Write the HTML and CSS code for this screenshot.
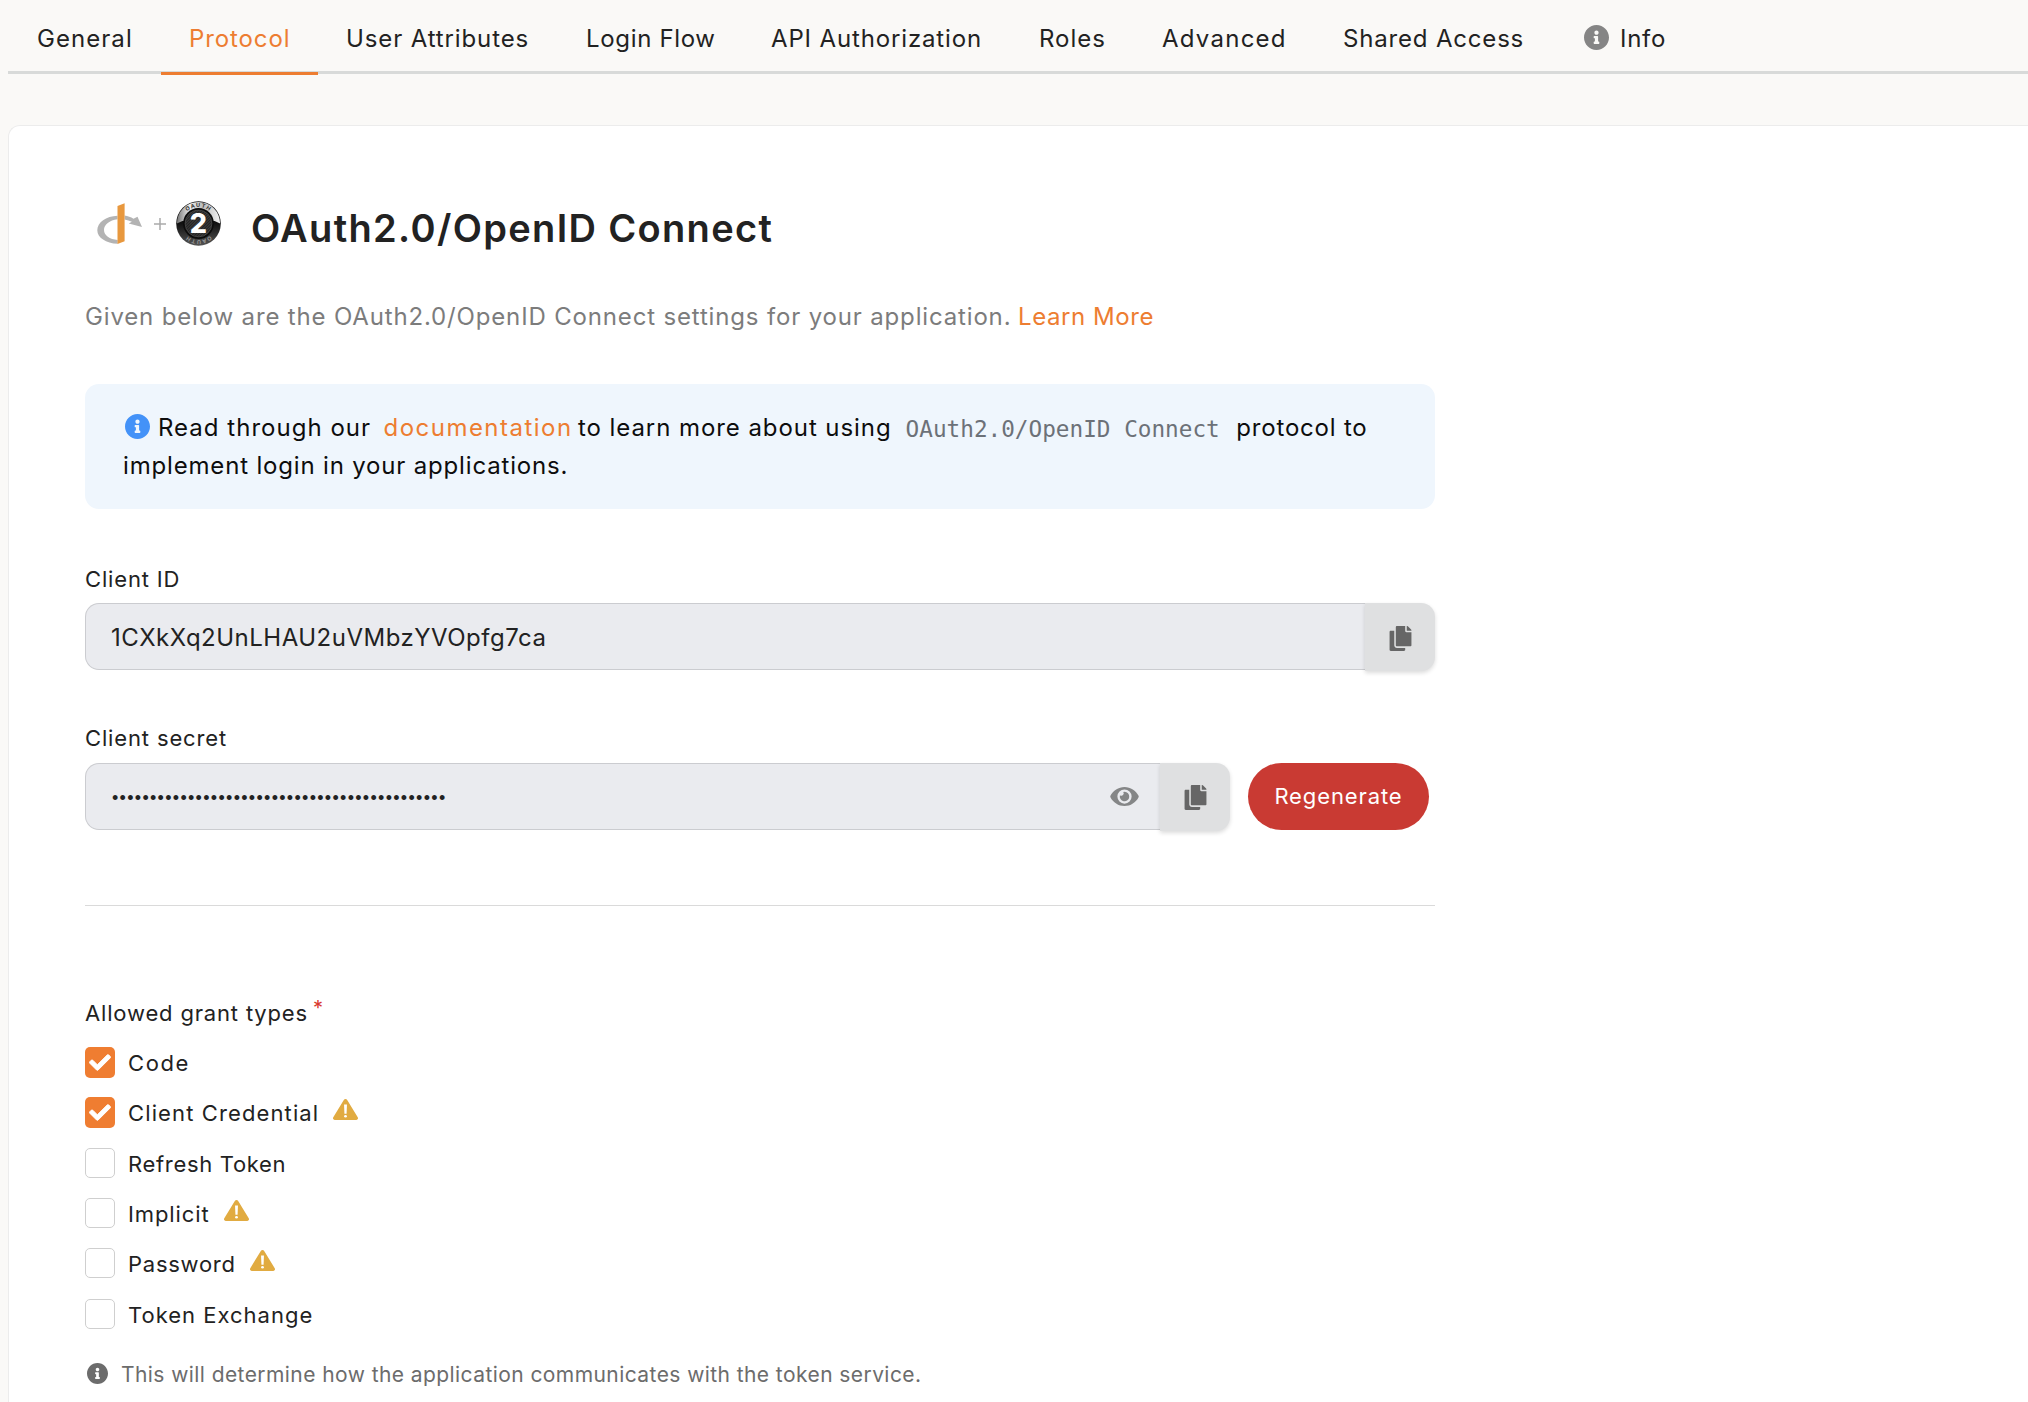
FILE: index.html
```
<!DOCTYPE html>
<html lang="en">
<head>
<meta charset="utf-8">
<title>OAuth2.0/OpenID Connect</title>
<link rel="stylesheet" href="styles.css">
</head>
<body>
<svg class="sprite" aria-hidden="true">
  <symbol id="info" viewBox="8 8 496 496"><path d="M256 8C119.043 8 8 119.083 8 256c0 136.997 111.043 248 248 248s248-111.003 248-248C504 119.083 392.957 8 256 8zm0 110c23.196 0 42 18.804 42 42s-18.804 42-42 42-42-18.804-42-42 18.804-42 42-42zm56 254c0 6.627-5.373 12-12 12h-88c-6.627 0-12-5.373-12-12v-24c0-6.627 5.373-12 12-12h12v-64h-12c-6.627 0-12-5.373-12-12v-24c0-6.627 5.373-12 12-12h64c6.627 0 12 5.373 12 12v100h12c6.627 0 12 5.373 12 12v24z"/></symbol>
  <symbol id="copy" viewBox="0 0 448 512"><path d="M320 448v40c0 13.255-10.745 24-24 24H24c-13.255 0-24-10.745-24-24V120c0-13.255 10.745-24 24-24h72v296c0 30.879 25.121 56 56 56h168zm0-344V0H152c-13.255 0-24 10.745-24 24v368c0 13.255 10.745 24 24 24h272c13.255 0 24-10.745 24-24V128H344c-13.2 0-24-10.8-24-24zm120.971-31.029L375.029 7.029A24 24 0 0 0 358.059 0H352v96h96v-6.059a24 24 0 0 0-7.029-16.97z"/></symbol>
  <symbol id="eye" viewBox="0 64 576 384"><path d="M572.52 241.4C518.29 135.59 410.93 64 288 64S57.68 135.64 3.48 241.41a32.35 32.35 0 0 0 0 29.19C57.71 376.41 165.07 448 288 448s230.32-71.64 284.52-177.41a32.35 32.35 0 0 0 0-29.19zM288 400a144 144 0 1 1 144-144 143.93 143.93 0 0 1-144 144zm0-240a95.31 95.31 0 0 0-25.31 3.79 47.85 47.85 0 0 1-66.9 66.9A95.78 95.78 0 1 0 288 160z"/></symbol>
  <symbol id="check" viewBox="-12 52 536 408"><path stroke="currentColor" stroke-width="24" stroke-linejoin="round" d="M173.898 439.404l-166.4-166.4c-9.997-9.997-9.997-26.206 0-36.204l36.203-36.204c9.997-9.998 26.207-9.998 36.204 0L192 312.69 432.095 72.596c9.997-9.997 26.207-9.997 36.204 0l36.203 36.204c9.997 9.997 9.997 26.206 0 36.204l-294.4 294.401c-9.998 9.997-26.207 9.997-36.204-.001z"/></symbol>
  <symbol id="warn" viewBox="0 32 512 448" preserveAspectRatio="none"><path d="M256 32c14.2 0 27.3 7.5 34.5 19.8l216 368c7.3 12.4 7.3 27.7.2 40.1S486.3 480 472 480H40c-14.3 0-27.6-7.7-34.7-20.1s-7-27.8.2-40.1l216-368C228.7 39.5 241.8 32 256 32z"/><path fill="#fff" d="M226 150h60l-8 198h-44z"/><circle fill="#fff" cx="256" cy="400" r="29"/></symbol>
</svg>

<nav class="tabs">
  <a class="tab t-general"><span class="s1">General</span></a>
  <a class="tab t-protocol active"><span class="s2">Protocol</span></a>
  <a class="tab t-attr"><span class="s3">User Attributes</span></a>
  <a class="tab t-login"><span class="s4">Login Flow</span></a>
  <a class="tab t-api"><span class="s5">API Authorization</span></a>
  <a class="tab t-roles"><span class="s6">Roles</span></a>
  <a class="tab t-adv"><span class="s7">Advanced</span></a>
  <a class="tab t-shared"><span class="s8">Shared Access</span></a>
  <a class="tab t-info"><svg><use href="#info"/></svg><span class="s9">Info</span></a>
</nav>

<main class="card">
  <header class="head">
    <svg class="openid" viewBox="0 0 46 42">
      <path fill="#b3b3b3" d="M20.5 12.7C9 13.2.3 19.3.3 27.2c0 7.4 8.6 13 20.4 13.6V37C12.600 36.300 7 32.400 7 27c0-5.400 5.600-9.700 13.500-10.700zM27.600 12.400c3.300.5 6.200 1.500 8.900 3.300l4-1.900L45 24l-13.300-3.600 3.200-1.600c-2.200-1.200-4.600-2-7.300-2.400z"/>
      <path fill="#e8983e" d="M20.500 3L27.600.2v38L20.500 41z"/>
    </svg>
    <svg class="plus" viewBox="0 0 12 12"><path d="M6 0v12M0 6h12"/></svg>
    <svg class="oauth" viewBox="0 0 45 45">
      <defs>
        <linearGradient id="rim" x1="0" y1="0" x2="1" y2="0"><stop offset="0" stop-color="#777"/><stop offset=".3" stop-color="#eee"/><stop offset=".6" stop-color="#bbb"/><stop offset="1" stop-color="#f2f2f2"/></linearGradient>
        <linearGradient id="base" x1="0" y1="0" x2="0" y2="1"><stop offset=".5" stop-color="#111"/><stop offset="1" stop-color="#555"/></linearGradient>
        <pattern id="mesh" width="2" height="2" patternUnits="userSpaceOnUse" patternTransform="rotate(45)"><rect width="2" height="2" fill="#222"/><rect width="1" height="2" fill="#3c3c3c"/></pattern>
        <path id="arcTop" d="M6 22.500a16.500 16.500 0 0 1 33 0"/>
        <path id="arcBottom" d="M39 22.500a16.500 16.500 0 0 1-33 0"/>
      </defs>
      <circle cx="22.500" cy="22.500" r="22.300" fill="url(#base)"/>
      <path fill="url(#rim)" d="M.9 22.500a21.600 21.600 0 0 1 43.200 0l-5.500-2.500H6.400z"/>
      <circle cx="22.500" cy="22.500" r="15.400" fill="#0c0c0c"/>
      <circle cx="22.500" cy="22.500" r="13.400" fill="url(#mesh)" stroke="#555" stroke-width=".6"/>
      <text class="rim-text"><textPath href="#arcTop" startOffset="50%" text-anchor="middle">OAUTH</textPath></text>
      <text class="rim-text dim"><textPath href="#arcBottom" startOffset="50%" text-anchor="middle">OAUTH</textPath></text>
      <text class="two" x="22.300" y="32" text-anchor="middle">2</text>
    </svg>
    <h1>OAuth2.0/OpenID Connect</h1>
  </header>

  <p class="sub"><span class="sub-text">Given below are the OAuth2.0/OpenID Connect settings for your application.</span><a class="learn">Learn More</a></p>

  <section class="alert">
    <p class="line"><svg><use href="#info"/></svg><span class="a1">Read through our</span><a class="a2">documentation</a><span class="a3">to learn more about using</span><code>OAuth2.0/OpenID Connect</code><span class="a4">protocol to</span></p>
    <p class="line"><span class="a5">implement login in your applications.</span></p>
  </section>

  <label class="label client-id">Client ID</label>
  <div class="field id-field">
    <div class="input"><span class="id-value">1CXkXq2UnLHAU2uVMbzYVOpfg7ca</span></div>
    <button class="copy"><svg><use href="#copy"/></svg></button>
  </div>

  <label class="label client-secret">Client secret</label>
  <div class="field secret-field">
    <div class="input"><span class="dots">••••••••••••••••••••••••••••••••••••••••••••</span><svg class="eye"><use href="#eye"/></svg></div>
    <button class="copy"><svg><use href="#copy"/></svg></button>
    <button class="regen">Regenerate</button>
  </div>

  <hr>

  <div class="label grants">Allowed grant types<sup>*</sup></div>
  <ul class="options">
    <li><span class="box on"><svg><use href="#check"/></svg></span><span class="g1">Code</span></li>
    <li><span class="box on"><svg><use href="#check"/></svg></span><span class="g2">Client Credential</span><svg class="warn"><use href="#warn"/></svg></li>
    <li><span class="box"></span><span class="g3">Refresh Token</span></li>
    <li><span class="box"></span><span class="g4">Implicit</span><svg class="warn"><use href="#warn"/></svg></li>
    <li><span class="box"></span><span class="g5">Password</span><svg class="warn"><use href="#warn"/></svg></li>
    <li><span class="box"></span><span class="g6">Token Exchange</span></li>
  </ul>
  <p class="note"><svg><use href="#info"/></svg><span>This will determine how the application communicates with the token service.</span></p>
</main>
</body>
</html>
```
FILE: styles.css
```
* { box-sizing: border-box; }
html, body { height: 100%; }
body {
  margin: 0;
  padding-left: 8px;
  overflow: hidden;
  background: #faf9f7;
  color: #222;
  font-family: Inter, "Liberation Sans", sans-serif;
  font-size: 24px;
  font-weight: 400;
}
p, h1, ul { margin: 0; padding: 0; }
svg { display: block; flex: none; fill: currentColor; }
button { border: 0; padding: 0; font: inherit; }
span, a, code { white-space: nowrap; }
.sprite { position: absolute; width: 0; height: 0; }

/* Tabs */
.tabs { display: flex; height: 74px; border-bottom: 3px solid #d8dad9; }
.tab {
  display: flex;
  flex: none;
  height: 75px;
  padding: 24px 0 0 28px;
  line-height: 30px;
  border-bottom: 3px solid transparent;
}
.tab.active { color: #ed7d31; border-color: #ed7d31; }
.t-general { width: 153px; padding-left: 29px; }
.t-protocol { width: 157px; }
.t-attr { width: 240px; }
.t-login { width: 185px; }
.t-api { width: 268px; }
.t-roles { width: 123px; }
.t-adv { width: 181px; }
.t-shared { width: 238px; }
.t-info { padding-left: 31px; }
.t-info svg { width: 25px; height: 25px; margin: 1px 11px 0 0; color: #858585; }
.s1 { letter-spacing: 1.05px; }
.s2 { letter-spacing: .9px; }
.s3 { letter-spacing: .88px; }
.s4 { letter-spacing: .66px; }
.s5 { letter-spacing: .858px; }
.s6 { letter-spacing: 1px; }
.s7 { letter-spacing: 1.25px; }
.s8 { letter-spacing: .82px; }
.s9 { letter-spacing: .7px; }

/* Card */
.card {
  display: flex;
  flex-direction: column;
  height: 1290px;
  margin-top: 51px;
  padding: 75px 0 0 76px;
  background: #fff;
  border: solid #ececec;
  border-width: 1px 0 0 1px;
  border-radius: 12px 0 0 0;
}
.head { display: flex; height: 45px; padding-left: 12px; }
.openid { width: 46px; height: 42px; margin-top: 2px; }
.plus { width: 12px; height: 12px; margin: 17px 10px 0 11px; stroke: #aaa; stroke-width: 1.5; }
.oauth { width: 45px; height: 45px; margin-right: 30px; }
.rim-text { font-size: 5.500px; font-weight: 700; letter-spacing: 1px; fill: #333; }
.rim-text.dim { fill: #999; }
.two { font-size: 27px; font-weight: 800; fill: #fff; }
h1 { margin-top: 4px; font-size: 38px; line-height: 46px; font-weight: 600; letter-spacing: 1.341px; white-space: nowrap; }
.sub { display: flex; margin-top: 56px; line-height: 30px; color: #7c7c7c; }
.sub-text { width: 933px; letter-spacing: .84px; }
.learn { letter-spacing: .576px; color: #ed7d31; }

.alert {
  width: 1350px;
  height: 125px;
  margin-top: 52px;
  padding: 25px 38px 24px;
  border-radius: 14px;
  background: #eff6fd;
  color: #0d0d0d;
  line-height: 38px;
}
.line { display: flex; height: 38px; }
.line svg { width: 25px; height: 25px; margin: 5px 10px 0 2px; color: #4392f8; }
.a1 { letter-spacing: 1.017px; margin-left: -2px; }
.a2 { letter-spacing: 1.485px; margin-left: 12.400px; color: #ed7d31; }
.a3 { letter-spacing: .933px; margin-left: 5.300px; }
.a4 { letter-spacing: .799px; margin-left: 16.600px; }
.a5 { letter-spacing: .827px; }
code { margin: 1px 0 0 14px; font-family: "DejaVu Sans Mono", monospace; font-size: 22.700px; color: #6c7178; }

/* Fields */
.label { font-size: 22px; line-height: 28px; }
.client-id { margin-top: 56px; letter-spacing: .832px; }
.client-secret { margin-top: 54px; letter-spacing: .86px; }
.field { display: flex; height: 67px; }
.id-field { margin-top: 10px; width: 1350px; }
.secret-field { margin-top: 11px; }
.input {
  display: flex;
  flex: 1;
  align-items: center;
  justify-content: space-between;
  padding: 0 21px 0 25px;
  background: #eaebef;
  border: 1px solid #cbccd0;
  border-right: 0;
  border-radius: 14px 0 0 14px;
}
.secret-field .input { flex: none; width: 1075px; }
.id-value { padding-top: 2px; font-size: 24px; letter-spacing: .497px; }
.dots { padding: 3px 0 0 1px; font-family: "Liberation Sans", sans-serif; font-size: 18px; letter-spacing: 1.300px; }
.eye { width: 29px; height: 19px; color: #858687; }
.copy {
  display: flex;
  align-items: center;
  justify-content: center;
  width: 70px;
  height: 68px;
  border-radius: 0 14px 14px 0;
  background: #dfe0e1;
  color: #666;
  box-shadow: 0 2px 4px rgba(0, 0, 0, .14);
}
.copy svg { width: 23px; height: 25px; margin-top: 2px; }
.secret-field .copy svg { margin: 0; }
.regen {
  width: 181px;
  margin-left: 18px;
  padding-bottom: 1px;
  border-radius: 34px;
  background: #c93a33;
  color: #fff;
  font-size: 22px;
  letter-spacing: .897px;
}
hr { width: 1350px; height: 1px; margin: 75px 0 0; border: 0; background: #dadada; }

/* Grant types */
.grants { display: flex; margin-top: 93px; letter-spacing: .832px; }
sup { margin: -3px 0 0 5px; font-size: 20px; line-height: 24px; color: #d9372f; }
.options { margin-top: 10px; list-style: none; font-size: 22px; }
.options li { display: flex; align-items: center; height: 50.300px; }
.options li > span:nth-child(2) { margin-left: 13px; padding-top: 2px; }
.box { display: flex; align-items: center; justify-content: center; width: 30px; height: 30px; border: 1px solid #cfcfcf; border-radius: 5px; }
.box.on { height: 31px; border: 0; background: #ef7d31; color: #fff; }
.box svg { width: 22px; height: 17px; }
.warn { width: 25px; height: 21px; margin: 0 0 6px 14px; color: #e1ab41; }
.g1 { letter-spacing: 1.600px; }
.g2 { letter-spacing: 1.120px; }
.g3 { letter-spacing: .672px; }
.g4 { letter-spacing: .9px; }
.g5 { letter-spacing: .737px; }
.g6 { letter-spacing: 1px; }
.note { display: flex; margin-top: 22px; padding-left: 2px; font-size: 21px; line-height: 28px; letter-spacing: .426px; color: #6c6c6c; }
.note svg { width: 21px; height: 21px; margin: 2px 13px 0 0; }
```
